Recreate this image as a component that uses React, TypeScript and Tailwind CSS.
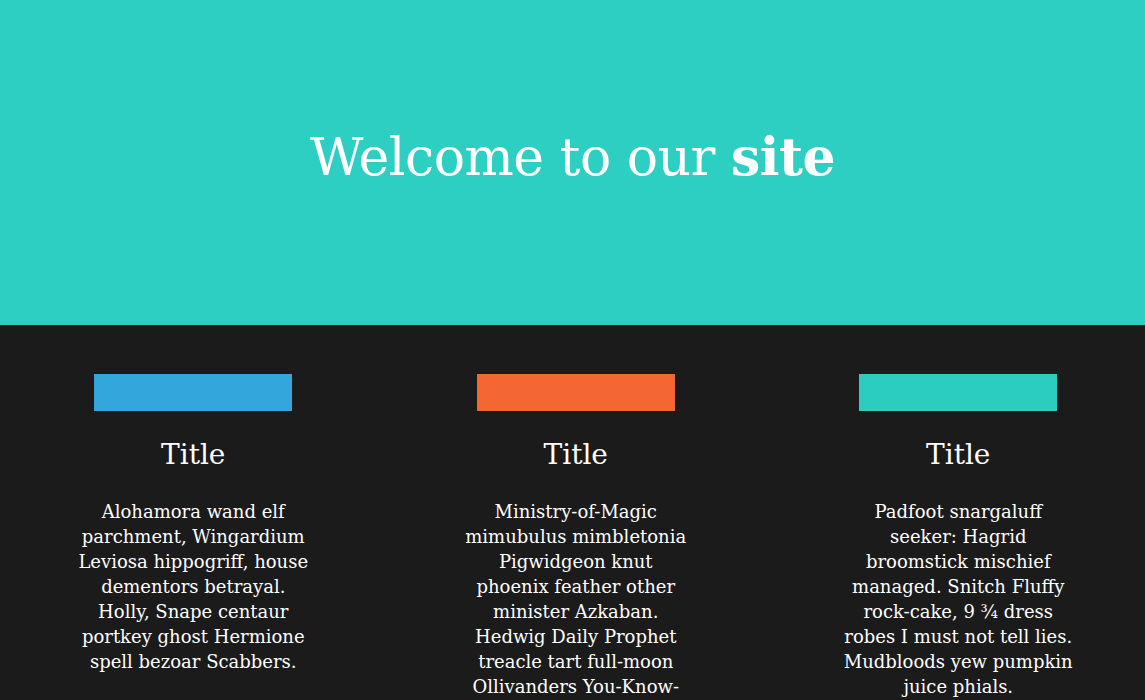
const cards = [
  {
    color: "bg-[#33a6dc]",
    width: "max-w-[240px]",
    text: "Alohamora wand elf parchment, Wingardium Leviosa hippogriff, house dementors betrayal. Holly, Snape centaur portkey ghost Hermione spell bezoar Scabbers.",
  },
  {
    color: "bg-[#f46632]",
    width: "max-w-[229px]",
    text: "Ministry-of-Magic mimubulus mimbletonia Pigwidgeon knut phoenix feather other minister Azkaban. Hedwig Daily Prophet treacle tart full-moon Ollivanders You-Know-Who cursed. Fawkes maze raw-steak Voldemort Goblin Wars snitch Forbidden forest grindylows wool socks.",
  },
  {
    color: "bg-[#2bcdc1]",
    width: "max-w-[229px]",
    text: "Padfoot snargaluff seeker: Hagrid broomstick mischief managed. Snitch Fluffy rock-cake, 9 ¾ dress robes I must not tell lies. Mudbloods yew pumpkin juice phials.",
  },
];

export default function App() {
  return (
    <div className="min-h-screen overflow-hidden bg-[#1b1b1b] font-['DejaVu_Serif',serif]">
      {/* hero */}
      <header className="h-[325px] bg-[#2ccfc2] flex items-center justify-center pb-[12px]">
        <h1 className="text-white text-[52px] font-normal tracking-[-0.5px]">
          Welcome to our <span className="font-bold">site</span>
        </h1>
      </header>

      <section className="grid grid-cols-[repeat(3,382.5px)] pt-[49px] pl-[2px] pb-10">
        {cards.map((c, i) => (
          <div key={i} className="flex flex-col items-center text-center">
            <div className={`w-[198px] h-[37px] ${c.color}`} />
            <h2 className="text-white text-[28px] mt-[24px] leading-[40px]">Title</h2>
            <p className={`text-white text-[18px] leading-[25px] mt-[24px] ${c.width}`}>
              {c.text}
            </p>
          </div>
        ))}
      </section>
    </div>
  );
}
